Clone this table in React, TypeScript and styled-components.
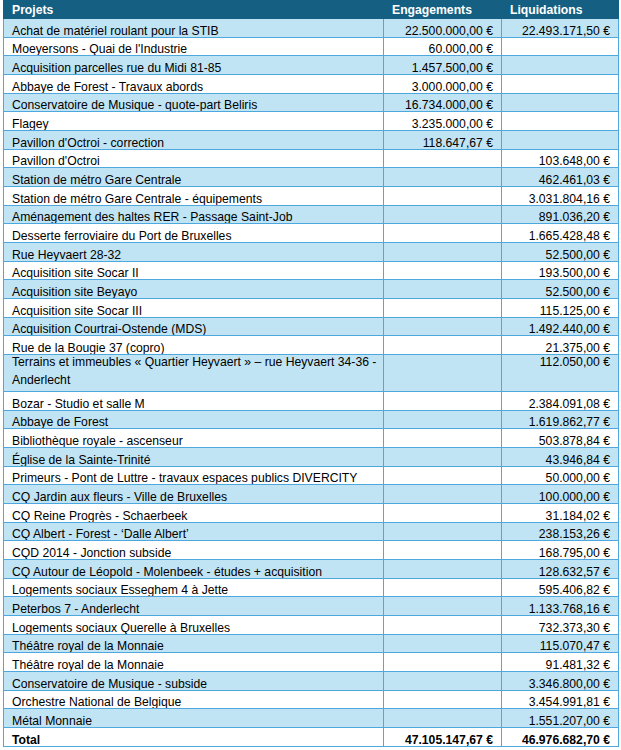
import React from "react";
import styled, { createGlobalStyle } from "styled-components";

const GlobalStyle = createGlobalStyle`
  html, body {
    margin: 0;
    padding: 0;
    background: #ffffff;
  }
  body {
    font-family: "Liberation Sans", Arial, sans-serif;
    font-size: 12.2px;
    color: #000000;
  }
`;

const BORDER = "#4ea8de";
const SHADE = "#c0e4f4";
const HEAD = "#156082";

const Sheet = styled.div`
  padding-left: 3px;
  width: 616px;
`;

const Table = styled.div`
  display: flex;
  flex-direction: column;
  width: 616px;
`;

const HeaderRow = styled.div`
  display: grid;
  grid-template-columns: 1px 380px 118px 117px;
  height: 19px;
  background: ${HEAD};
  color: #ffffff;
  font-weight: 700;
`;

const Row = styled.div<{ $shade: boolean; $tall?: boolean; $bold?: boolean }>`
  display: grid;
  grid-template-columns: 1px 380px 118px 117px;
  box-sizing: border-box;
  height: ${(p) => (p.$tall ? "37.33px" : "18.67px")};
  background: ${(p) => (p.$shade ? SHADE : "#ffffff")};
  border-bottom: 1px solid ${BORDER};
  font-weight: ${(p) => (p.$bold ? 700 : 400)};
`;

const LeftEdge = styled.div<{ $color: string }>`
  background: ${(p) => p.$color};
`;

const Cell = styled.div<{ $num?: boolean; $tall?: boolean; $head?: boolean }>`
  box-sizing: border-box;
  display: flex;
  align-items: ${(p) => (p.$tall ? "flex-start" : "flex-end")};
  justify-content: ${(p) => (p.$num ? "flex-end" : "flex-start")};
  padding: 0 8px ${(p) => (p.$head ? "3px" : "0")} 8px;
  border-right: ${(p) => (p.$head ? "none" : `1px solid ${BORDER}`)};
  line-height: ${(p) => (p.$tall ? "18.67px" : "12px")};
  white-space: nowrap;
  overflow: hidden;
`;

const TallText = styled.span`
  margin-top: -2px;
  white-space: nowrap;
`;

type Item = { name: React.ReactNode; eng?: string; liq?: string; tall?: boolean };

const items: Item[] = [
  { name: "Achat de matériel roulant pour la STIB", eng: "22.500.000,00 €", liq: "22.493.171,50 €" },
  { name: "Moeyersons - Quai de l'Industrie", eng: "60.000,00 €" },
  { name: "Acquisition parcelles rue du Midi 81-85", eng: "1.457.500,00 €" },
  { name: "Abbaye de Forest - Travaux abords", eng: "3.000.000,00 €" },
  { name: "Conservatoire de Musique - quote-part Beliris", eng: "16.734.000,00 €" },
  { name: "Flagey", eng: "3.235.000,00 €" },
  { name: "Pavillon d'Octroi - correction", eng: "118.647,67 €" },
  { name: "Pavillon d'Octroi", liq: "103.648,00 €" },
  { name: "Station de métro Gare Centrale", liq: "462.461,03 €" },
  { name: "Station de métro Gare Centrale - équipements", liq: "3.031.804,16 €" },
  { name: "Aménagement des haltes RER - Passage Saint-Job", liq: "891.036,20 €" },
  { name: "Desserte ferroviaire du Port de Bruxelles", liq: "1.665.428,48 €" },
  { name: "Rue Heyvaert 28-32", liq: "52.500,00 €" },
  { name: "Acquisition site Socar II", liq: "193.500,00 €" },
  { name: "Acquisition site Beyayo", liq: "52.500,00 €" },
  { name: "Acquisition site Socar III", liq: "115.125,00 €" },
  { name: "Acquisition Courtrai-Ostende (MDS)", liq: "1.492.440,00 €" },
  { name: "Rue de la Bougie 37 (copro)", liq: "21.375,00 €" },
  {
    name: (
      <>
        Terrains et immeubles « Quartier Heyvaert » – rue Heyvaert 34-36 -
        <br />
        Anderlecht
      </>
    ),
    liq: "112.050,00 €",
    tall: true,
  },
  { name: "Bozar - Studio et salle M", liq: "2.384.091,08 €" },
  { name: "Abbaye de Forest", liq: "1.619.862,77 €" },
  { name: "Bibliothèque royale - ascenseur", liq: "503.878,84 €" },
  { name: "Église de la Sainte-Trinité", liq: "43.946,84 €" },
  { name: "Primeurs - Pont de Luttre  - travaux espaces publics DIVERCITY", liq: "50.000,00 €" },
  { name: "CQ Jardin aux fleurs - Ville de Bruxelles", liq: "100.000,00 €" },
  { name: "CQ Reine Progrès - Schaerbeek", liq: "31.184,02 €" },
  { name: "CQ Albert - Forest - ‘Dalle Albert’", liq: "238.153,26 €" },
  { name: "CQD 2014 - Jonction subside", liq: "168.795,00 €" },
  { name: "CQ Autour de Léopold - Molenbeek - études + acquisition", liq: "128.632,57 €" },
  { name: "Logements sociaux Esseghem 4 à Jette", liq: "595.406,82 €" },
  { name: "Peterbos 7 - Anderlecht", liq: "1.133.768,16 €" },
  { name: "Logements sociaux Querelle à Bruxelles", liq: "732.373,30 €" },
  { name: "Théâtre royal de la Monnaie", liq: "115.070,47 €" },
  { name: "Théâtre royal de la Monnaie", liq: "91.481,32 €" },
  { name: "Conservatoire de Musique - subside", liq: "3.346.800,00 €" },
  { name: "Orchestre National de Belgique", liq: "3.454.991,81 €" },
  { name: "Métal Monnaie", liq: "1.551.207,00 €" },
];

export default function App() {
  return (
    <>
      <GlobalStyle />
      <Sheet>
        <Table>
          <HeaderRow>
            <LeftEdge $color={HEAD} />
            <Cell $head>Projets</Cell>
            <Cell $head>Engagements</Cell>
            <Cell $head>Liquidations</Cell>
          </HeaderRow>
          {items.map((it, i) => (
            <Row key={i} $shade={i % 2 === 0} $tall={it.tall}>
              <LeftEdge $color={BORDER} />
              <Cell $tall={it.tall}>
                {it.tall ? <TallText>{it.name}</TallText> : it.name}
              </Cell>
              <Cell $num $tall={it.tall}>
                {it.tall ? <TallText>{it.eng ?? ""}</TallText> : it.eng ?? ""}
              </Cell>
              <Cell $num $tall={it.tall}>
                {it.tall ? <TallText>{it.liq ?? ""}</TallText> : it.liq ?? ""}
              </Cell>
            </Row>
          ))}
          <Row $shade={false} $bold>
            <LeftEdge $color={BORDER} />
            <Cell>Total</Cell>
            <Cell $num>47.105.147,67 €</Cell>
            <Cell $num>46.976.682,70 €</Cell>
          </Row>
        </Table>
      </Sheet>
    </>
  );
}
